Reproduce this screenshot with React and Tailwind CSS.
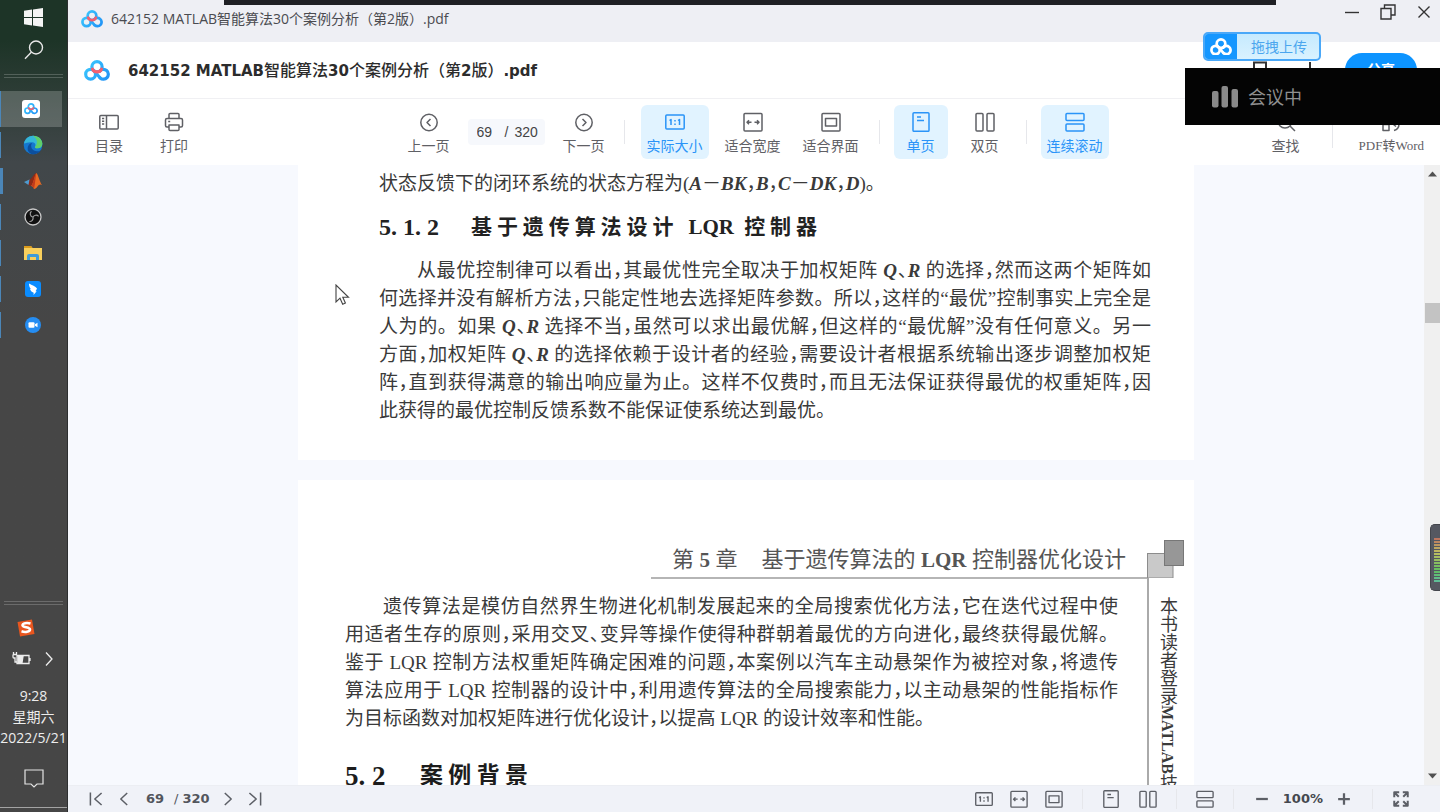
import { useId } from 'react';

const FILE_LATIN = 'font-["DejaVu_Sans"] text-[15px] font-bold';

/* ---------- logos ---------- */

function CloudLogo({ className, mono }) {
  const id = useId();
  const blue = mono ? '#fff' : `url(#${id})`;
  return (
    <svg className={className} viewBox="0 0 26 21" fill="none" strokeWidth="3.2" strokeLinecap="round">
      <defs>
        <linearGradient id={id} x1="0" y1="0" x2="26" y2="21" gradientUnits="userSpaceOnUse">
          <stop offset="0" stopColor="#3fd0ff" />
          <stop offset="1" stopColor="#1e8df5" />
        </linearGradient>
      </defs>
      <circle cx="13" cy="6.800" r="5.100" stroke={blue} />
      <circle cx="6.600" cy="14.200" r="4.900" stroke={blue} />
      <path d="M15.600 11.200 A4.900 4.900 0 1 1 16 17.800" stroke={blue} />
      <path d="M10.500 11.500 L16 17.800" stroke={blue} />
      <path d="M8.500 9.200 A5.100 5.100 0 0 0 17.500 9.200" stroke={mono ? '#fff' : '#f4606f'} />
    </svg>
  );
}

function EdgeIcon() {
  return (
    <svg width="20" height="20" viewBox="0 0 20 20">
      <circle cx="10" cy="10" r="9.3" fill="#1577cf" />
      <path d="M1 8.500C2 3.500 5.500.7 10 .7c5.200 0 9.300 3.600 9.300 8 0 3-2.200 4.600-4.700 4.600-2 0-3-.7-2.500-1.600.8-1.200.6-4-2.600-4.400C6 6.900 2.800 8 1 8.500z" fill="#35b6d8" />
      <path d="M10 .7c5.200 0 9.300 3.600 9.300 8 0 3-2.200 4.600-4.700 4.600-2 0-3-.7-2.500-1.600C15 9 14.500 3.500 10 .7z" fill="#5fcf6a" />
      <path d="M9 8c-2 3-.5 8 5 8.300 1.700.1 3-.5 4-1-1.700 2.700-4.600 4-8 4C6 19 3.700 15 5 11.500 5.800 9.400 7.500 8.200 9 8z" fill="#0c4f9e" />
    </svg>
  );
}

function MatlabIcon() {
  return (
    <svg width="18" height="18" viewBox="0 0 18 18">
      <path d="M0 10 5.500 7.600 8.500 9.500 4.500 13z" fill="#4f9bd0" />
      <path d="M5.500 7.600C8 7 9.500 2 12.300 1L9 12.500 7 14 4.500 13z" fill="#8e2a17" />
      <path d="M12.300 1c2 1.500 3.300 9 5.700 12-2-1.200-3.400-.2-4.500 1.500-1 1.400-2 2.300-3.500 2.500-.6-1.600-1.500-3-3-3C9.500 12 10.500 3.500 12.300 1z" fill="#e96a22" />
      <path d="M12.300 1c-.8 4-1 10-2.300 16-.6-1.600-1.500-3-3-3C9.500 12 10.500 3.500 12.300 1z" fill="#c23b1b" />
    </svg>
  );
}

function ObsIcon() {
  return (
    <svg width="18" height="18" viewBox="0 0 18 18" fill="none">
      <circle cx="9" cy="9" r="8" fill="#111" stroke="#c9c9c9" strokeWidth="1.300" />
      <path d="M7.500 3.200A3.400 3.400 0 0 0 9 9.200M14.600 8.300A3.400 3.400 0 0 0 9 9.200M5.400 13.500A3.400 3.400 0 0 0 9 9.200" stroke="#9c9c9c" strokeWidth="1.200" />
    </svg>
  );
}

function FolderIcon() {
  return (
    <svg width="18" height="16" viewBox="0 0 18 16">
      <path d="M0 1h7l1.500 2H18v12H0z" fill="#f8cf5c" />
      <path d="M0 1h7l1.500 2H0z" fill="#d99a1c" />
      <path d="M3 15V11q0-2 2-2h8q2 0 2 2v4h-3v-3H6v3z" fill="#3f9bd8" />
    </svg>
  );
}

function BirdIcon() {
  return (
    <svg width="18" height="18" viewBox="0 0 18 18">
      <rect x="1" y="1" width="16" height="16" rx="3" fill="#0a8cff" />
      <path d="M5 3.500c3 1.500 6.500 3 8 5-.4 1.200-1 2-1.500 2.700h1.200L9.500 15l.2-2.300C7.500 12 6.500 10.500 6 9l.8-.2C5.500 7.500 5 5.500 5 3.500z" fill="#fff" />
    </svg>
  );
}

function VideoIcon() {
  return (
    <svg width="18" height="18" viewBox="0 0 18 18">
      <circle cx="9" cy="9" r="8" fill="#258df2" />
      <rect x="4.500" y="6.300" width="6" height="5.400" rx="1" fill="#fff" />
      <path d="M11 8.300l2.500-1.600v4.600L11 9.700z" fill="#fff" />
    </svg>
  );
}

/* ---------- viewer icons, drawn on a 20px box ---------- */

function Icon({ size = 20, children }) {
  return (
    <svg width={size} height={size} viewBox="0 0 20 20" fill="none" stroke="currentColor" strokeWidth="1.500" strokeLinejoin="round">
      {children}
    </svg>
  );
}

const icons = {
  toc: (
    <>
      <rect x="0.800" y="3.500" width="18.400" height="13.500" rx="1" />
      <path d="M7.500 3.500V17M3 6.500h2.200M3 9.300h2.200M3 12.100h2.200" />
    </>
  ),
  print: (
    <>
      <path d="M5 6.500V2.500Q5 1.500 6 1.500h8q1 0 1 1v4" />
      <path d="M5 15H3Q1.500 15 1.500 13.500V8Q1.500 6.500 3 6.500h14q1.500 0 1.500 1.500v5.500Q18.500 15 17 15h-2" />
      <path d="M5 13h10v4.500q0 1-1 1H6q-1 0-1-1zM4.200 9.500h2" />
    </>
  ),
  prev: (
    <>
      <circle cx="10" cy="10.500" r="8.200" />
      <path d="M11.500 7 8 10.500l3.500 3.500" />
    </>
  ),
  next: (
    <>
      <circle cx="10" cy="10.500" r="8.200" />
      <path d="M8.500 7l3.500 3.500L8.500 14" />
    </>
  ),
  actual: (
    <>
      <rect x="0.800" y="3" width="18.400" height="14" rx="1" />
      <path d="M4.500 8.500 6 7.500V13M13 8.500l1.500-1V13M10 8v1.500M10 11.500V13" />
    </>
  ),
  fitWidth: (
    <>
      <rect x="1" y="1.500" width="18" height="17.500" rx="1" />
      <path d="M4 10.200h4.500M11.500 10.200H16M6 8.200l-2 2 2 2M14 8.200l2 2-2 2" />
    </>
  ),
  fitPage: (
    <>
      <rect x="1" y="1.500" width="18" height="17.500" rx="1" />
      <rect x="4.500" y="6.500" width="11" height="7.500" />
    </>
  ),
  single: (
    <>
      <rect x="2" y="0.800" width="16" height="18.500" rx="1" />
      <path d="M6 5h4M6 8.500h7" />
    </>
  ),
  double: (
    <>
      <rect x="1" y="1.500" width="7" height="17.500" rx="1" />
      <rect x="12" y="1.500" width="7" height="17.500" rx="1" />
    </>
  ),
  scroll: (
    <>
      <rect x="1" y="1.500" width="18" height="7" rx="1" />
      <rect x="1" y="12" width="18" height="7" rx="1" />
    </>
  ),
  find: (
    <>
      <circle cx="9" cy="9" r="7" />
      <path d="M14 14l5 5" />
    </>
  ),
  convert: (
    <>
      <path d="M2 12.500h6v6H2zM4 9.500V3h6M18 7v5q0 5-5 6.500M12.500 12.500l2.500 2" />
    </>
  ),
  first: <path d="M3 2v16M17 2.500 8.500 10l8.500 7.500" strokeWidth="1.900" />,
  back: <path d="M14 2.500 6 10l8 7.500" strokeWidth="1.900" />,
  forward: <path d="M6 2.500 14 10l-8 7.500" strokeWidth="1.900" />,
  last: <path d="M17 2v16M3 2.500 11.500 10 3 17.500" strokeWidth="1.900" />,
  minus: <path d="M3.500 10h13" strokeWidth="2.500" />,
  plus: <path d="M3.500 10h13M10 3.500v13" strokeWidth="2.500" />,
  full: (
    <path d="M2.500 8V2.500H8M12 2.500h5.500V8M17.500 12v5.500H12M8 17.500H2.500V12M3 3l4.500 4.500M17 3l-4.500 4.500M17 17l-4.500-4.500M3 17l4.500-4.500" strokeWidth="2.200" />
  ),
};

/* ---------- task bar ---------- */

function TaskItem({ label, active, wide, children }) {
  return (
    <button aria-label={label} className={`flex h-9 items-center ${active ? 'mr-[5px] bg-white/20' : ''}`}>
      <span className={`bg-[#4b86b8] ${active ? 'h-9' : 'h-[26px]'} ${wide ? 'w-[3px]' : 'w-px'}`} />
      <span className={`flex w-16 justify-center ${wide ? '-ml-0.5' : ''}`}>{children}</span>
    </button>
  );
}

function TaskBar() {
  return (
    <aside className="flex w-[68px] shrink-0 flex-col overflow-hidden border-r border-[#2d2f30] bg-linear-to-b from-[#1d3427] from-5% via-[#41474a] via-20% to-[#464646] to-40% text-[#ededed]">
      <button aria-label="开始" className="flex h-[34px] items-center justify-center">
        <svg width="19" height="19" viewBox="0 0 19 19" fill="#f4f4f4">
          <path d="M0 2.800 8 1.600V9H0zM9 1.500 19 0v9H9zM0 10h8v7.400L0 16.200zM9 10h10v9L9 17.500z" />
        </svg>
      </button>
      <button aria-label="搜索" className="flex h-8 items-center justify-center">
        <svg width="20" height="20" viewBox="0 0 20 20" fill="none" stroke="#e8e8e8" strokeWidth="1.400">
          <circle cx="12" cy="7.500" r="6.500" />
          <path d="M7.300 12.200 1 18.700" />
        </svg>
      </button>
      <div className="mx-1 mt-2 mb-[13px] h-1 border-y border-white/20" />
      <TaskItem label="百度网盘" active>
        <span className="flex size-[18px] items-center justify-center rounded-[3px] bg-white">
          <CloudLogo className="w-3.5" />
        </span>
      </TaskItem>
      <TaskItem label="Edge"><EdgeIcon /></TaskItem>
      <TaskItem label="MATLAB" wide><MatlabIcon /></TaskItem>
      <TaskItem label="OBS"><ObsIcon /></TaskItem>
      <TaskItem label="文件资源管理器"><FolderIcon /></TaskItem>
      <TaskItem label="钉钉"><BirdIcon /></TaskItem>
      <TaskItem label="会议"><VideoIcon /></TaskItem>

      <div className="mx-1 mt-auto h-1 border-y border-white/20" />
      <div className="flex h-[46px] items-center pl-[17px]">
        <svg width="18" height="18" viewBox="0 0 18 18">
          <path d="M.5 3 15 .5 17.500 15 3 17.500z" fill="#e8561f" />
          <path d="M13.500 4.500C10 3.500 5.500 4 5.500 6.300c0 2.500 7.500 1.500 7.500 4.200 0 2.500-5 3-8.500 1.800" fill="none" stroke="#fff" strokeWidth="2.600" />
        </svg>
      </div>
      <div className="flex h-4 items-center gap-3.5 pl-3">
        <svg width="19" height="14" viewBox="0 0 19 14" fill="none" stroke="#ededed" strokeWidth="1.300">
          <path d="M5 3.500h12v8H5zM18 6v3M1 2.500h4M1.500 0v2.500M4.500 0v2.500M1 2.500v2.500q0 1 1 1h1v4h2" />
          <path d="M6 4.500h5l-1 6H6z" fill="#ededed" />
        </svg>
        <svg width="8" height="14" viewBox="0 0 8 14" fill="none" stroke="#ededed" strokeWidth="1.300">
          <path d="M1 .5 7 7 1 13.500" />
        </svg>
      </div>
      <time className="mt-[18px] flex flex-col items-center text-sm leading-[21px] whitespace-nowrap">
        <span>9:28</span>
        <span>星期六</span>
        <span>2022/5/21</span>
      </time>
      <button aria-label="通知" className="mt-[21px] flex justify-center">
        <svg width="20" height="20" viewBox="0 0 20 20" fill="none" stroke="#e4e4e4" strokeWidth="1.200">
          <path d="M1 1h18v14h-6l-3 3-3-3H1z" />
        </svg>
      </button>
      <div className="mt-[18px] mb-1 h-px bg-white/50" />
    </aside>
  );
}

/* ---------- viewer chrome ---------- */

function TitleBar() {
  return (
    <div className="flex h-[42px] items-start justify-between bg-[#eeeff4] pr-2 pl-[13px]">
      <div className="flex h-[38px] items-center gap-2">
        <CloudLogo className="w-[22px]" />
        <span className="text-sm text-[#4a4b50]">642152 MATLAB智能算法30个案例分析（第2版）.pdf</span>
      </div>
      <div className="flex h-6 items-center gap-5 text-[#333]">
        <button aria-label="最小化">
          <svg width="16" height="16" viewBox="0 0 16 16" stroke="currentColor" strokeWidth="1.400"><path d="M1 8.500h14" /></svg>
        </button>
        <button aria-label="还原">
          <svg width="16" height="16" viewBox="0 0 16 16" fill="none" stroke="currentColor" strokeWidth="1.400">
            <path d="M1 4.500h10V15H1zM4.500 4.500V1H15v10h-4" />
          </svg>
        </button>
        <button aria-label="关闭">
          <svg width="16" height="16" viewBox="0 0 16 16" stroke="currentColor" strokeWidth="1.400"><path d="M2.500 2.500l11 11M13.500 2.500l-11 11" /></svg>
        </button>
      </div>
    </div>
  );
}

function FileHeader() {
  return (
    <header className="flex h-[57px] items-center justify-between border-b border-[#f0f0f3] bg-white pr-[23px] pl-4">
      <div className="flex items-center gap-[18px]">
        <CloudLogo className="w-[26px]" />
        <h1 className="text-base font-medium text-[#2c2c2c]">
          <span className={FILE_LATIN}>642152 MATLAB</span>智能算法<span className={FILE_LATIN}>30</span>个案例分析（第
          <span className={FILE_LATIN}>2</span>版）<span className={FILE_LATIN}>.pdf</span>
        </h1>
      </div>
      <div className="flex items-center text-[#333]">
        <button aria-label="保存" className="mr-9">
          <svg width="14" height="18" viewBox="0 0 14 18" fill="none" stroke="currentColor" strokeWidth="2"><path d="M1 17V1.500h12V17z" /></svg>
        </button>
        <button aria-label="更多" className="mr-7">
          <svg width="14" height="18" viewBox="0 0 14 18" fill="none" stroke="currentColor" strokeWidth="2"><path d="M7 1v16" /></svg>
        </button>
        <button className="h-[34px] w-[72px] rounded-full bg-[#0d94ff] text-sm leading-6 font-bold text-white">分享</button>
      </div>
    </header>
  );
}

function Tool({ icon, label, active, pad = '', serif }) {
  return (
    <button
      className={`flex h-[54px] flex-col items-center gap-1 rounded-md pt-[7px] whitespace-nowrap ${pad} ${
        active ? 'bg-[#e1f3ff] text-[#2a94f8]' : 'text-[#5f6065]'
      } ${serif ? 'font-["Liberation_Serif","Noto_Sans_CJK_SC",serif] text-[13px]' : 'text-sm'}`}
    >
      <Icon>{icons[icon]}</Icon>
      <span className="leading-5">{label}</span>
    </button>
  );
}

function Divider({ className }) {
  return <span className={`w-px bg-[#e6e7eb] ${className}`} />;
}

function Toolbar() {
  return (
    <nav className="flex h-[66px] items-center bg-white pr-4 pl-[27px]">
      <div className="flex flex-1 gap-[37px]">
        <Tool icon="toc" label="目录" />
        <Tool icon="print" label="打印" />
      </div>
      <div className="mr-1.5 flex items-center">
        <Tool icon="prev" label="上一页" pad="px-[3px]" />
        <label className="mx-[15px] flex h-[26px] w-[77px] items-center rounded-sm bg-[#f6f8fc] pl-[9px] font-['Liberation_Sans'] text-sm text-[#444]">
          <input aria-label="页码" defaultValue="69" className="w-7 bg-transparent" />
          <span>/</span>
          <span className="ml-1.5">320</span>
        </label>
        <Tool icon="next" label="下一页" pad="px-[3px]" />
        <Divider className="mx-4 h-6" />
        <div className="flex gap-2.5">
          <Tool icon="actual" label="实际大小" pad="px-1.5" active />
          <Tool icon="fitWidth" label="适合宽度" pad="px-1.5" />
          <Tool icon="fitPage" label="适合界面" pad="px-1.5" />
        </div>
        <Divider className="mx-3.5 h-6" />
        <div className="flex gap-2.5">
          <Tool icon="single" label="单页" pad="px-[13px]" active />
          <Tool icon="double" label="双页" pad="px-[13px]" />
        </div>
        <Divider className="mx-3.5 h-6" />
        <Tool icon="scroll" label="连续滚动" pad="px-1.5" active />
      </div>
      <div className="flex flex-1 items-center justify-end">
        <Tool icon="find" label="查找" />
        <Divider className="mr-[26px] ml-8 h-8" />
        <Tool icon="convert" label="PDF转Word" serif />
      </div>
    </nav>
  );
}

function FootButton({ icon, label, size = 18 }) {
  return (
    <button aria-label={label}>
      <Icon size={size}>{icons[icon]}</Icon>
    </button>
  );
}

function FootBar() {
  return (
    <footer className="flex h-[27px] shrink-0 items-center justify-between border-t border-[#eceef3] bg-[#f0f2f8] pr-[30px] pl-5 text-[#5c5f66]">
      <div className="flex items-center">
        <div className="flex gap-3">
          <FootButton icon="first" label="第一页" size={16} />
          <FootButton icon="back" label="前一页" size={16} />
        </div>
        <label className="mx-2.5 flex items-center pl-1 font-['DejaVu_Sans'] text-[13px] font-bold text-[#53565d]">
          <input aria-label="当前页" defaultValue="69" className="w-7 bg-transparent" />
          <span className="font-normal">/</span>
          <span className="ml-1">320</span>
        </label>
        <div className="flex gap-[11px]">
          <FootButton icon="forward" label="后一页" size={16} />
          <FootButton icon="last" label="最后一页" size={16} />
        </div>
      </div>
      <div className="flex items-center gap-[19px]">
        <div className="flex gap-[17px]">
          <FootButton icon="actual" label="实际大小" />
          <FootButton icon="fitWidth" label="适合宽度" />
          <FootButton icon="fitPage" label="适合界面" />
        </div>
        <Divider className="h-5" />
        <FootButton icon="single" label="单页" />
        <FootButton icon="double" label="双页" />
        <Divider className="h-5" />
        <FootButton icon="scroll" label="连续滚动" />
        <Divider className="h-5" />
        <div className="flex items-center gap-3">
          <FootButton icon="minus" label="缩小" />
          <span className="font-['DejaVu_Sans'] text-[13px] font-bold text-[#45484f]">100%</span>
          <FootButton icon="plus" label="放大" />
        </div>
        <Divider className="h-5" />
        <FootButton icon="full" label="全屏" />
      </div>
    </footer>
  );
}

/* ---------- document ---------- */

// *X* marks a matrix symbol; commas and enumeration marks take half a cell
function typeset(line) {
  return line.split(/(\*[A-Z]+\*|[，、])/).map((part, i) => {
    if (part.startsWith('*')) {
      return <em key={i} className="font-bold">{part.slice(1, -1)}</em>;
    }
    if (part === '，' || part === '、') {
      return <span key={i} className="[font-feature-settings:'halt']">{part}</span>;
    }
    return part;
  });
}

function Paragraph({ lines, className }) {
  return (
    <p className={`text-[19px] leading-7 whitespace-nowrap ${className}`}>
      {lines.map((line, i) => (
        <span
          key={i}
          className={`block ${i === 0 ? 'pl-[38px]' : ''} ${i < lines.length - 1 ? '[text-align-last:justify]' : ''}`}
        >
          {typeset(line)}
        </span>
      ))}
    </p>
  );
}

const paragraphOne = [
  '从最优控制律可以看出，其最优性完全取决于加权矩阵 *Q*、*R* 的选择，然而这两个矩阵如',
  '何选择并没有解析方法，只能定性地去选择矩阵参数。所以，这样的“最优”控制事实上完全是',
  '人为的。如果 *Q*、*R* 选择不当，虽然可以求出最优解，但这样的“最优解”没有任何意义。另一',
  '方面，加权矩阵 *Q*、*R* 的选择依赖于设计者的经验，需要设计者根据系统输出逐步调整加权矩',
  '阵，直到获得满意的输出响应量为止。这样不仅费时，而且无法保证获得最优的权重矩阵，因',
  '此获得的最优控制反馈系数不能保证使系统达到最优。',
];

const paragraphTwo = [
  '遗传算法是模仿自然界生物进化机制发展起来的全局搜索优化方法，它在迭代过程中使',
  '用适者生存的原则，采用交叉、变异等操作使得种群朝着最优的方向进化，最终获得最优解。',
  '鉴于 LQR 控制方法权重矩阵确定困难的问题，本案例以汽车主动悬架作为被控对象，将遗传',
  '算法应用于 LQR 控制器的设计中，利用遗传算法的全局搜索能力，以主动悬架的性能指标作',
  '为目标函数对加权矩阵进行优化设计，以提高 LQR 的设计效率和性能。',
];

function FirstPage() {
  return (
    <article className="mx-auto w-full max-w-[896px] bg-white pt-[5px] pr-[43px] pb-[35px] pl-[81px]">
      <p className="text-[19px] leading-7">{typeset('状态反馈下的闭环系统的状态方程为(*A*－*BK*，*B*，*C*－*DK*，*D*)。')}</p>
      <h2 className="mt-[15px] flex text-[21px] leading-7 font-bold whitespace-nowrap text-[#222]">
        <span className="w-[92px] text-2xl leading-7">5. 1. 2</span>
        <span className="w-[346px] [text-align-last:justify]">基于遗传算法设计 LQR 控制器</span>
      </h2>
      <Paragraph lines={paragraphOne} className="mt-4" />
    </article>
  );
}

function SecondPage() {
  return (
    <article className="mx-auto mt-5 flex w-full max-w-[896px] bg-white pt-[60px] pr-2.5 pl-[47px]">
      <div className="flex-1">
        <div className="flex justify-end">
          <div className="flex gap-6 border-b-2 border-[#b5b5b5] px-[21px] pt-1.5 pb-[3px] text-[22px] leading-7 whitespace-nowrap text-[#555]">
            <span>第 <b className="text-[21px] font-bold">5</b> 章</span>
            <span>基于遗传算法的 <b className="text-[21px] font-bold">LQR</b> 控制器优化设计</span>
          </div>
        </div>
        <Paragraph lines={paragraphTwo} className="mt-3.5 pr-[29px]" />
        <h2 className="mt-[29px] flex text-[23px] leading-7 font-bold whitespace-nowrap text-[#1c1c1c]">
          <span className="w-[75px] text-[27px]">5. 2</span>
          <span className="w-[108px] [text-align-last:justify]">案例背景</span>
        </h2>
      </div>
      <div className="w-[37px]">
        <svg width="37" height="38" viewBox="0 0 37 38" className="block">
          <rect x="0.500" y="13.500" width="25.500" height="24.500" fill="#c9c9c9" stroke="#8c8c8c" />
          <rect x="17.500" y="0.500" width="19" height="25" fill="#979797" stroke="#777" />
        </svg>
        <div className="flex border-l-2 border-[#aaa] pt-[19px] pl-[5px]">
          <span className="text-lg leading-[26px] whitespace-nowrap [writing-mode:vertical-rl]">
            本书读者登录<span className="text-base leading-[26px] font-bold">MATLAB</span>技
          </span>
        </div>
      </div>
    </article>
  );
}

function ScrollTrack() {
  return (
    <div className="flex w-4 shrink-0 flex-col items-center justify-between bg-[#f0f0f0] py-1.5">
      <svg width="9" height="6" viewBox="0 0 9 6"><path d="M0 5.500 4.500.5 9 5.500z" fill="#505050" /></svg>
      <div className="mt-[126px] mb-auto ml-px h-5 w-[15px] bg-[#c3c3c3]" />
      <svg width="9" height="6" viewBox="0 0 9 6"><path d="M0 .5 4.500 5.500 9 .5z" fill="#505050" /></svg>
    </div>
  );
}

/* ---------- windows floating over the viewer ---------- */

function Overlays() {
  return (
    <>
      <div className="absolute top-0 right-[164px] left-[224px] h-[5px] bg-[#1f2024]" />

      <button className="absolute top-8 right-[119px] flex h-[29px] w-[118px] overflow-hidden rounded-[5px] border-2 border-[#4aa8f8] bg-linear-to-b from-[#c6eafe] to-[#d9f2ff] text-sm text-[#4ba6ee]">
        <span className="flex h-full w-8 items-center justify-center bg-[#1597ff]">
          <CloudLogo className="w-[22px]" mono />
        </span>
        <span className="flex-1 pl-0.5 leading-[25px]">拖拽上传</span>
      </button>

      <div className="absolute top-[68px] right-0 flex h-[57px] w-[255px] items-center gap-2.5 bg-[#040404] pl-[27px] text-lg text-[#8f8f8f]">
        <svg width="26" height="22" viewBox="0 0 26 22" fill="#8a8a8a">
          <rect x="0" y="5" width="6.500" height="16.500" rx="2" />
          <rect x="9.500" y="0" width="6.500" height="21.500" rx="2" />
          <rect x="19.500" y="3" width="6.500" height="18.500" rx="2" />
        </svg>
        <span>会议中</span>
      </div>

      {/* level meter docked to the screen edge */}
      <div className="absolute top-[524px] right-0 h-[67px] w-2.5 rounded-l-[5px] border border-r-0 border-[#44464c] bg-[#555861] pt-[13px] pl-[3px]">
        <svg width="6" height="46" viewBox="0 0 6 46">
          {Array.from({ length: 15 }, (_, i) => (
            <rect key={i} y={i * 3} width="6" height="2" fill={`hsl(${15 + i * 10} 42% 56%)`} />
          ))}
        </svg>
      </div>

      <svg className="absolute top-[284px] left-[335px]" width="15" height="22" viewBox="0 0 15 22">
        <path d="M1 1v17l4-3.800 2.700 6 2.700-1.200L7.800 13.300h5.700z" fill="#fff" stroke="#444" strokeWidth="1.100" />
      </svg>
    </>
  );
}

export default function App() {
  return (
    <div className="relative flex h-screen overflow-hidden bg-white font-['Open_Sans','Noto_Sans_CJK_SC',sans-serif]">
      <TaskBar />
      <div className="flex min-w-0 flex-1 flex-col">
        <TitleBar />
        <FileHeader />
        <Toolbar />
        <div className="flex min-h-0 flex-1">
          <main className="min-w-0 flex-1 overflow-hidden bg-[#f7f9fe] font-['Liberation_Serif','Noto_Sans_CJK_SC',serif] text-[#3a3a3a]">
            <FirstPage />
            <SecondPage />
          </main>
          <ScrollTrack />
        </div>
        <FootBar />
      </div>
      <Overlays />
    </div>
  );
}
